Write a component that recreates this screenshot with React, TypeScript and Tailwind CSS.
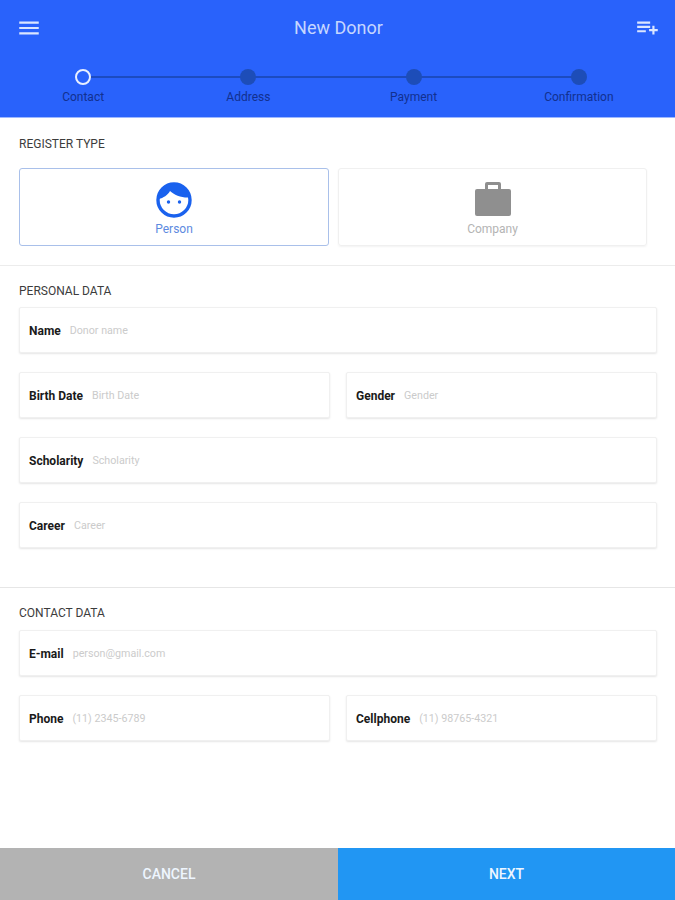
const steps = ["Contact", "Address", "Payment", "Confirmation"]

function Field({ label, placeholder }: { label: string; placeholder: string }) {
  return (
    <div className="flex h-[46px] min-w-0 flex-1 items-center rounded-[2px] border border-[#f0f0f0] bg-white pl-[9px] pt-[2px] shadow-[0_1px_2px_rgba(0,0,0,0.1)]">
      <span className="text-[12px] font-bold text-[#1a1a1a]">{label}</span>
      <span className="ml-[9px] text-[10.7px] text-[#cbcbcb]">{placeholder}</span>
    </div>
  )
}

function SectionTitle({ children }: { children: string }) {
  return <h2 className="text-[12px] leading-[14px] text-[#3c3c3c]">{children}</h2>
}

export default function App() {
  return (
    <div className="flex h-[900px] w-[675px] flex-col bg-white font-['Roboto',sans-serif]">
      <header className="h-[118px] shrink-0 border-b border-[#9db8ff] bg-[#2962fb]">
        <div className="flex h-[55px] items-center justify-between pl-[16px] pr-[14px]">
          <svg width="26" height="26" viewBox="0 0 24 24" fill="#dbe6ff">
            <path d="M3 18h18v-2H3v2zm0-5h18v-2H3v2zm0-7v2h18V6H3z" />
          </svg>
          <h1 className="text-[18px] text-[#c5d6ff]">New Donor</h1>
          <svg width="26" height="26" viewBox="0 0 24 24" fill="#dbe6ff">
            <path d="M2 6h12v2H2V6zm0 4h12v2H2v-2zm0 4h8v2H2v-2zm14-1v-3h2v3h3v2h-3v3h-2v-3h-3v-2h3z" />
          </svg>
        </div>
        <div className="relative ml-[0.5px] mt-[8px] grid w-[661px] grid-cols-4">
          <div className="absolute left-[83px] right-[83px] top-[13px] h-[2px] bg-[#1c4bc0]" />
          {steps.map((step, i) => (
            <div key={step} className="relative flex flex-col items-center pt-[6px]">
              {i === 0 ? (
                <div className="h-[16px] w-[16px] rounded-full border-2 border-[#e8efff] bg-[#2962fb]" />
              ) : (
                <div className="h-[16px] w-[16px] rounded-full bg-[#1d4db8]" />
              )}
              <span className="mt-[5px] text-[12px] leading-[14px] text-[#12308f]">{step}</span>
            </div>
          ))}
        </div>
      </header>

      <main className="flex-1">
        <section className="border-b border-[#ececec] pb-[19px] pl-[19px] pr-[28px] pt-[19px]">
          <SectionTitle>REGISTER TYPE</SectionTitle>
          <div className="mt-[17px] flex gap-[9px]">
            <div className="flex h-[78px] w-[310px] flex-col items-center rounded-[3px] border-[1.5px] border-[#a9c0ea] pt-[12.5px]">
              <svg width="36" height="36" viewBox="0 0 36 36">
                <circle cx="18" cy="18" r="16" fill="#ffffff" stroke="#1a62ee" strokeWidth="3.4" />
                <path d="M3 17C7 16 12 13 14 9c4 4 12 7 19 6.500C31 7 25 2 18 2 10 2 4 8 3 17z" fill="#1a62ee" />
                <circle cx="12.5" cy="20" r="1.7" fill="#1a62ee" />
                <circle cx="23.5" cy="20" r="1.7" fill="#1a62ee" />
              </svg>
              <span className="mt-[4px] text-[12px] leading-[14px] text-[#5d8ae0]">Person</span>
            </div>
            <div className="flex h-[78px] w-[309px] flex-col items-center rounded-[3px] border border-[#f0f0f0] pt-[13px] shadow-[0_1px_2px_rgba(0,0,0,0.05)]">
              <svg width="36" height="36" viewBox="0 0 36 36">
                <path
                  fill="#8f8f8f"
                  fillRule="evenodd"
                  d="M12 0h12a2 2 0 0 1 2 2v5h8a2 2 0 0 1 2 2v23a2 2 0 0 1-2 2H2a2 2 0 0 1-2-2V9a2 2 0 0 1 2-2h8V2a2 2 0 0 1 2-2zm1 3v4h10V3H13z"
                />
              </svg>
              <span className="mt-[4px] text-[12px] leading-[14px] text-[#b4b4b4]">Company</span>
            </div>
          </div>
        </section>

        <section className="border-b border-[#e6e6e6] pb-[39px] pl-[19px] pr-[18px] pt-[18px]">
          <SectionTitle>PERSONAL DATA</SectionTitle>
          <div className="mt-[9px] flex flex-col gap-[19px]">
            <div className="flex">
              <Field label="Name" placeholder="Donor name" />
            </div>
            <div className="flex gap-[16px]">
              <Field label="Birth Date" placeholder="Birth Date" />
              <Field label="Gender" placeholder="Gender" />
            </div>
            <div className="flex">
              <Field label="Scholarity" placeholder="Scholarity" />
            </div>
            <div className="flex">
              <Field label="Career" placeholder="Career" />
            </div>
          </div>
        </section>

        <section className="pl-[19px] pr-[18px] pt-[18px]">
          <SectionTitle>CONTACT DATA</SectionTitle>
          <div className="mt-[10px] flex flex-col gap-[19px]">
            <div className="flex">
              <Field label="E-mail" placeholder="person@gmail.com" />
            </div>
            <div className="flex gap-[16px]">
              <Field label="Phone" placeholder="(11) 2345-6789" />
              <Field label="Cellphone" placeholder="(11) 98765-4321" />
            </div>
          </div>
        </section>
      </main>

      <footer className="flex h-[52px] shrink-0 text-[14px] font-medium text-[#eef6ff]">
        <button className="flex w-[338px] items-center justify-center bg-[#b3b3b3]">CANCEL</button>
        <button className="flex flex-1 items-center justify-center bg-[#2196f3]">NEXT</button>
      </footer>
    </div>
  )
}
